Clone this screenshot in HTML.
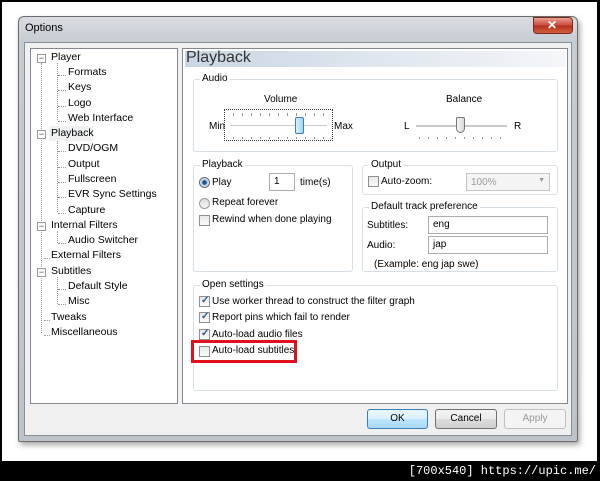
<!DOCTYPE html>
<html><head><style>
*{margin:0;padding:0;box-sizing:border-box}
body{width:600px;height:481px;background:#000;position:relative;overflow:hidden;font-family:"Liberation Sans",sans-serif;font-size:10px;color:#000}
.a{position:absolute}
.t{position:absolute;white-space:nowrap;font-size:10px}
.grp{position:absolute;border:1px solid #d5dfe5;border-radius:3px}
.gl{position:absolute;top:-7px;left:6px;background:#fff;padding:0 2px;font-size:10px}
.cb{position:absolute;width:11px;height:11px;border:1px solid #8f8f8f;background:linear-gradient(#e8e8e8,#fafafa)}
.cb.on::after{content:"✓";position:absolute;left:1px;top:-2px;font-size:10px;color:#2a5a9a;font-weight:bold}
.in{position:absolute;border:1px solid #abadb3;background:#fff;height:18px;padding:2px 4px;font-size:10px}
.btn{position:absolute;height:20px;border:1px solid #707070;border-radius:3px;background:linear-gradient(#f2f2f2,#ebebeb 50%,#dddddd 50%,#cfcfcf);text-align:center;line-height:18px;font-size:10px}
.tr{position:absolute;font-size:10.5px;white-space:nowrap}
.dl{position:absolute;border-left:1px dotted #999}
.dh{position:absolute;border-top:1px dotted #999;width:8px}
.ex{position:absolute;width:9px;height:9px;border:1px solid #999;background:#fff;font-size:9px;line-height:6px;text-align:center;color:#444}
</style></head><body>
<div class="a" style="left:2px;top:2px;width:595px;height:459px;background:#fff"></div>
<!-- window frame -->
<div class="a" style="left:18px;top:16px;width:560px;height:426px;border:1px solid #6b6b6b;border-radius:6px 6px 2px 2px;background:linear-gradient(#d9dde2,#c6ccd3 25px,#bcc3cb);box-shadow:2px 3px 6px rgba(0,0,0,.35)"></div>
<div class="t" style="left:25px;top:22px;font-size:11px;color:#000">Options</div>
<div class="a" style="left:533px;top:17px;width:40px;height:17px;border:1px solid #7a2a20;border-radius:0 4px 4px 4px;background:linear-gradient(#e8a08f,#c8473a 50%,#b32c1c 50%,#d0603d)"></div>
<div class="t" style="left:547px;top:18px;color:#fff;font-weight:bold;font-size:12px">✕</div>
<div class="a" style="left:24px;top:42px;width:548px;height:394px;background:#f0f0f0;border:1px solid #8a8f96"></div>
<!-- tree -->
<div class="a" style="left:30px;top:48px;width:148px;height:356px;background:#fff;border:1px solid #828790"></div>
<div class="dl" style="left:41px;top:63px;height:270px"></div>
<div class="dl" style="left:57px;top:63px;height:57px"></div>
<div class="dl" style="left:57px;top:139px;height:73px"></div>
<div class="dl" style="left:57px;top:231px;height:12px"></div>
<div class="dl" style="left:57px;top:277px;height:27px"></div>
<div class="ex" style="left:37px;top:54px">−</div>
<div class="ex" style="left:37px;top:130px">−</div>
<div class="ex" style="left:37px;top:222px">−</div>
<div class="ex" style="left:37px;top:268px">−</div>
<div class="dh" style="left:44px;top:258px;width:6px"></div>
<div class="dh" style="left:44px;top:320px;width:6px"></div>
<div class="dh" style="left:44px;top:335px;width:6px"></div>
<div class="dh" style="left:58px;top:75px"></div><div class="dh" style="left:58px;top:90px"></div><div class="dh" style="left:58px;top:106px"></div><div class="dh" style="left:58px;top:121px"></div>
<div class="dh" style="left:58px;top:151px"></div><div class="dh" style="left:58px;top:167px"></div><div class="dh" style="left:58px;top:182px"></div><div class="dh" style="left:58px;top:197px"></div><div class="dh" style="left:58px;top:213px"></div>
<div class="dh" style="left:58px;top:243px"></div><div class="dh" style="left:58px;top:289px"></div><div class="dh" style="left:58px;top:304px"></div>
<div class="tr" style="left:51px;top:51px">Player</div>
<div class="tr" style="left:68px;top:66px">Formats</div>
<div class="tr" style="left:68px;top:81px">Keys</div>
<div class="tr" style="left:68px;top:97px">Logo</div>
<div class="tr" style="left:68px;top:112px">Web Interface</div>
<div class="a" style="left:49px;top:126px;width:44px;height:15px;background:#eef0f2"></div>
<div class="tr" style="left:51px;top:127px">Playback</div>
<div class="tr" style="left:68px;top:142px">DVD/OGM</div>
<div class="tr" style="left:68px;top:158px">Output</div>
<div class="tr" style="left:68px;top:173px">Fullscreen</div>
<div class="tr" style="left:68px;top:188px">EVR Sync Settings</div>
<div class="tr" style="left:68px;top:204px">Capture</div>
<div class="tr" style="left:51px;top:219px">Internal Filters</div>
<div class="tr" style="left:68px;top:234px">Audio Switcher</div>
<div class="tr" style="left:51px;top:249px">External Filters</div>
<div class="tr" style="left:51px;top:265px">Subtitles</div>
<div class="tr" style="left:68px;top:280px">Default Style</div>
<div class="tr" style="left:68px;top:295px">Misc</div>
<div class="tr" style="left:51px;top:311px">Tweaks</div>
<div class="tr" style="left:51px;top:326px">Miscellaneous</div>
<!-- right panel -->
<div class="a" style="left:182px;top:48px;width:386px;height:356px;background:#fff;border:1px solid #828790"></div>
<div class="a" style="left:185px;top:51px;width:381px;height:16px;background:linear-gradient(90deg,#c9d6e3,#f4f6f9)"></div>
<div class="t" style="left:186px;top:49px;font-size:16px;color:#333">Playback</div>
<!-- audio -->
<div class="grp" style="left:193px;top:79px;width:365px;height:73px"><div class="gl">Audio</div></div>
<div class="t" style="left:264px;top:94px">Volume</div>
<div class="t" style="left:446px;top:94px">Balance</div>
<div class="t" style="left:209px;top:121px">Min</div>
<div class="t" style="left:334px;top:121px">Max</div>
<div class="t" style="left:404px;top:121px">L</div>
<div class="t" style="left:514px;top:121px">R</div>
<div class="a" style="left:224px;top:109px;width:109px;height:32px;border:1px dotted #333"></div>
<div class="a" style="left:231px;top:125px;width:96px;height:2px;background:#c9c9c9;border-bottom:1px solid #fff"></div>
<div class="a" style="left:295px;top:117px;width:9px;height:17px;border:1px solid #3c7fb1;border-radius:2px;background:linear-gradient(90deg,#d9f1fb,#9fd6ef)"></div>
<div class="a" style="left:233px;top:113px;width:92px;height:3px;background:repeating-linear-gradient(90deg,#999 0 1px,transparent 1px 9px)"></div>
<div class="a" style="left:233px;top:137px;width:92px;height:2px;background:repeating-linear-gradient(90deg,#999 0 1px,transparent 1px 9px)"></div>
<div class="a" style="left:416px;top:125px;width:91px;height:2px;background:#c9c9c9"></div>
<div class="a" style="left:456px;top:117px;width:9px;height:16px;border:1px solid #777;border-radius:2px 2px 5px 5px;background:linear-gradient(90deg,#f4f4f4,#d8d8d8)"></div>
<div class="a" style="left:419px;top:137px;width:86px;height:2px;background:repeating-linear-gradient(90deg,#999 0 1px,transparent 1px 9px)"></div>
<!-- playback -->
<div class="grp" style="left:193px;top:165px;width:160px;height:107px"><div class="gl">Playback</div></div>
<div class="a" style="left:199px;top:177px;width:11px;height:11px;border-radius:50%;border:1px solid #667;background:radial-gradient(#1f4f8f 30%,#9bc0e0 40%,#e8eef4 70%)"></div>
<div class="t" style="left:212px;top:177px">Play</div>
<div class="in" style="left:269px;top:173px;width:26px">1</div>
<div class="t" style="left:300px;top:177px">time(s)</div>
<div class="a" style="left:199px;top:198px;width:11px;height:11px;border-radius:50%;border:1px solid #999;background:linear-gradient(#ddd,#f8f8f8)"></div>
<div class="t" style="left:212px;top:197px">Repeat forever</div>
<div class="cb" style="left:199px;top:215px"></div>
<div class="t" style="left:212px;top:214px">Rewind when done playing</div>
<!-- output -->
<div class="grp" style="left:362px;top:165px;width:196px;height:30px"><div class="gl">Output</div></div>
<div class="cb" style="left:368px;top:176px"></div>
<div class="t" style="left:381px;top:176px">Auto-zoom:</div>
<div class="a" style="left:466px;top:173px;width:84px;height:18px;border:1px solid #c5c5c5;background:#f4f4f4;color:#999;padding:3px 4px;font-size:10px">100%<span style="position:absolute;right:4px;top:3px;font-size:7px">▼</span></div>
<div class="grp" style="left:362px;top:207px;width:196px;height:65px"><div class="gl">Default track preference</div></div>
<div class="t" style="left:367px;top:220px">Subtitles:</div>
<div class="in" style="left:428px;top:216px;width:120px">eng</div>
<div class="t" style="left:367px;top:240px">Audio:</div>
<div class="in" style="left:428px;top:236px;width:120px">jap</div>
<div class="t" style="left:374px;top:259px">(Example: eng jap swe)</div>
<!-- open settings -->
<div class="grp" style="left:193px;top:285px;width:365px;height:106px"><div class="gl">Open settings</div></div>
<div class="cb on" style="left:199px;top:296px"></div><div class="t" style="left:212px;top:296px">Use worker thread to construct the filter graph</div>
<div class="cb on" style="left:199px;top:312px"></div><div class="t" style="left:212px;top:312px">Report pins which fail to render</div>
<div class="cb on" style="left:199px;top:329px"></div><div class="t" style="left:212px;top:329px">Auto-load audio files</div>
<div class="cb" style="left:199px;top:346px"></div><div class="t" style="left:212px;top:345px">Auto-load subtitles</div>
<div class="a" style="left:191px;top:340px;width:106px;height:23px;border:3px solid #e0101c"></div>
<!-- buttons -->
<div class="btn" style="left:367px;top:409px;width:61px;border-color:#3c7fb1;background:linear-gradient(#eaf6fd,#d9f0fc 50%,#bee6fd 50%,#a7d9f5)">OK</div>
<div class="btn" style="left:435px;top:409px;width:62px">Cancel</div>
<div class="btn" style="left:504px;top:409px;width:62px;border-color:#c0c0c0;background:#f4f4f4;color:#999">Apply</div>
<div class="t" style="right:4px;top:464px;color:#fff;font-size:12px;font-family:'Liberation Mono',monospace">[700x540] https://upic.me/</div>
</body></html>
